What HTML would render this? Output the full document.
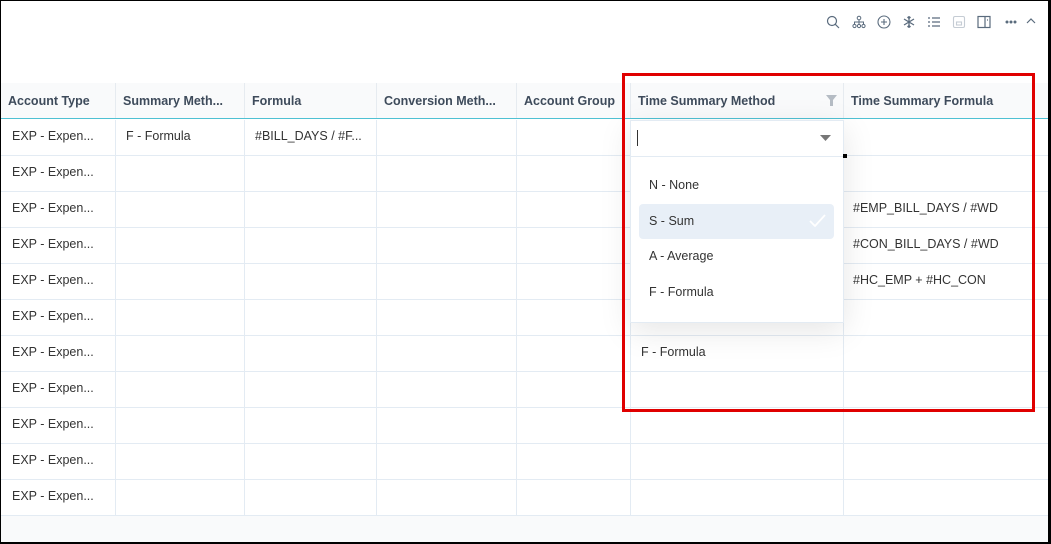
<!DOCTYPE html>
<html><head><meta charset="utf-8"><style>
*{margin:0;padding:0;box-sizing:border-box}
body{width:1051px;height:544px;overflow:hidden;background:#000;font-family:"Liberation Sans",sans-serif;font-size:12.5px;color:#333;position:relative}
#pg{position:absolute;left:1px;top:1px;width:1047px;height:541px;background:#fff;overflow:hidden}
.a{position:absolute}
.hdr{position:absolute;top:82px;left:0;width:1047px;height:36px;background:#f9fafb}
.hc{position:absolute;top:0;height:36px;line-height:36px;padding-left:7px;font-weight:bold;color:#3e4b5b;font-size:12.5px;border-left:1px solid #e6ebf0}
.row{position:absolute;left:0;width:1047px;height:36px;border-bottom:1px solid #e3ebf3}
.vl{position:absolute;top:119px;width:1px;height:396px;background:#e3ebf3}
.t{position:absolute;line-height:35px}
.ic{position:absolute;top:14px;width:14px;height:14px}
</style></head><body><div id="pg">
<svg class="ic" style="left:825px" viewBox="0 0 14 14" fill="none" stroke="#5a6b7d" stroke-width="1.2"><circle cx="6" cy="6" r="4.5"/><path d="M9.3 9.3L13 13"/></svg>
<svg class="ic" style="left:851px" viewBox="0 0 14 14" fill="none" stroke="#5a6b7d" stroke-width="1"><circle cx="7" cy="3" r="1.8"/><path d="M7 5v2M2.5 9V7h9v2M7 7v2"/><circle cx="2.5" cy="11" r="1.6"/><circle cx="7" cy="11" r="1.6"/><circle cx="11.5" cy="11" r="1.6"/></svg>
<svg class="ic" style="left:876px" viewBox="0 0 14 14" fill="none" stroke="#5a6b7d" stroke-width="1.1"><circle cx="7" cy="7" r="6"/><path d="M7 4v6M4 7h6"/></svg>
<svg class="ic" style="left:901px" viewBox="0 0 14 14" fill="none" stroke="#5a6b7d" stroke-width="1.3"><path d="M7 1v12M2 4l10 6M2 10l10-6M5.5 2L7 3.5 8.5 2M5.5 12L7 10.5 8.5 12"/></svg>
<svg class="ic" style="left:926px" viewBox="0 0 14 14" fill="none" stroke="#5a6b7d" stroke-width="1.2"><path d="M1 3h2M5 3h8M1 7h2M5 7h8M1 11h2M5 11h8"/></svg>
<svg class="ic" style="left:951px" viewBox="0 0 14 14" fill="none" stroke="#c5ccd4" stroke-width="1.1"><rect x="1.5" y="1.5" width="11" height="11" rx="1.5"/><rect x="4.5" y="7" width="5" height="3"/></svg>
<svg class="ic" style="left:976px" viewBox="0 0 14 14" fill="none" stroke="#5a6b7d" stroke-width="1.2"><rect x="1" y="1.5" width="12" height="11"/><path d="M8 1.5v11M10 5h1"/></svg>
<svg class="a" style="left:1004px;top:19px" width="12" height="4"><circle cx="2" cy="2" r="1.5" fill="#5a6b7d"/><circle cx="6" cy="2" r="1.5" fill="#5a6b7d"/><circle cx="10" cy="2" r="1.5" fill="#5a6b7d"/></svg>
<svg class="a" style="left:1025px;top:16px" width="10" height="8" viewBox="0 0 10 8" fill="none" stroke="#5a6b7d" stroke-width="1.2"><path d="M1 6l4-4 4 4"/></svg>

<div class="hdr">
<div class="hc" style="left:0;border-left:0">Account Type</div>
<div class="hc" style="left:114px">Summary Meth...</div>
<div class="hc" style="left:243px">Formula</div>
<div class="hc" style="left:375px">Conversion Meth...</div>
<div class="hc" style="left:515px">Account Group</div>
<div class="hc" style="left:629px">Time Summary Method</div>
<div class="hc" style="left:842px">Time Summary Formula</div>
<svg class="a" style="left:825px;top:12px" width="11" height="11" viewBox="0 0 11 11"><path d="M0 0h11L7 5v6H4V5z" fill="#b5bcc4"/></svg>
</div>

<div class="row" style="top:119px"></div><div class="row" style="top:155px"></div><div class="row" style="top:191px"></div><div class="row" style="top:227px"></div><div class="row" style="top:263px"></div><div class="row" style="top:299px"></div><div class="row" style="top:335px"></div><div class="row" style="top:371px"></div><div class="row" style="top:407px"></div><div class="row" style="top:443px"></div><div class="row" style="top:479px"></div>
<div class="a" style="left:0;top:117px;width:1047px;height:1px;background:#4fc1d3"></div>
<div class="vl" style="left:114px"></div><div class="vl" style="left:243px"></div><div class="vl" style="left:375px"></div><div class="vl" style="left:515px"></div><div class="vl" style="left:629px"></div><div class="vl" style="left:842px"></div>
<div class="a" style="left:0;top:515px;width:1047px;height:26px;background:#f9fafb"></div>

<div class="t" style="left:11px;top:118px">EXP - Expen...</div>
<div class="t" style="left:11px;top:154px">EXP - Expen...</div>
<div class="t" style="left:11px;top:190px">EXP - Expen...</div>
<div class="t" style="left:11px;top:226px">EXP - Expen...</div>
<div class="t" style="left:11px;top:262px">EXP - Expen...</div>
<div class="t" style="left:11px;top:298px">EXP - Expen...</div>
<div class="t" style="left:11px;top:334px">EXP - Expen...</div>
<div class="t" style="left:11px;top:370px">EXP - Expen...</div>
<div class="t" style="left:11px;top:406px">EXP - Expen...</div>
<div class="t" style="left:11px;top:442px">EXP - Expen...</div>
<div class="t" style="left:11px;top:478px">EXP - Expen...</div>
<div class="t" style="left:125px;top:118px">F - Formula</div>
<div class="t" style="left:254px;top:118px">#BILL_DAYS / #F...</div>
<div class="t" style="left:852px;top:190px">#EMP_BILL_DAYS / #WD</div>
<div class="t" style="left:852px;top:226px">#CON_BILL_DAYS / #WD</div>
<div class="t" style="left:852px;top:262px">#HC_EMP + #HC_CON</div>
<div class="t" style="left:640px;top:334px">F - Formula</div>

<div class="a" style="left:629px;top:119px;width:214px;height:203px;background:#fff;box-shadow:0 8px 30px rgba(0,0,0,0.10);border:1px solid #e3ebf3"></div>
<div class="a" style="left:636px;top:129px;width:1px;height:16px;background:#333"></div>
<svg class="a" style="left:819px;top:134px" width="11" height="6"><path d="M0 0h11L5.5 6z" fill="#777"/></svg>
<div class="a" style="left:842px;top:153px;width:4px;height:4px;background:#000"></div>
<div class="a" style="left:630px;top:155px;width:212px;height:1px;background:#e3ebf3"></div>
<div class="t" style="left:648px;top:167px">N - None</div>
<div class="a" style="left:638px;top:203px;width:195px;height:35px;background:#e8eff7;border-radius:4px"></div>
<div class="t" style="left:648px;top:203px">S - Sum</div>
<svg class="a" style="left:808px;top:213px" width="17" height="13" fill="none" stroke="#fff" stroke-width="1.8"><path d="M1 7l5 5L16 1"/></svg>
<div class="t" style="left:648px;top:238px">A - Average</div>
<div class="t" style="left:648px;top:274px">F - Formula</div>

<div class="a" style="left:621px;top:72px;width:413px;height:339px;border:3px solid #e00000"></div>
</div></body></html>
